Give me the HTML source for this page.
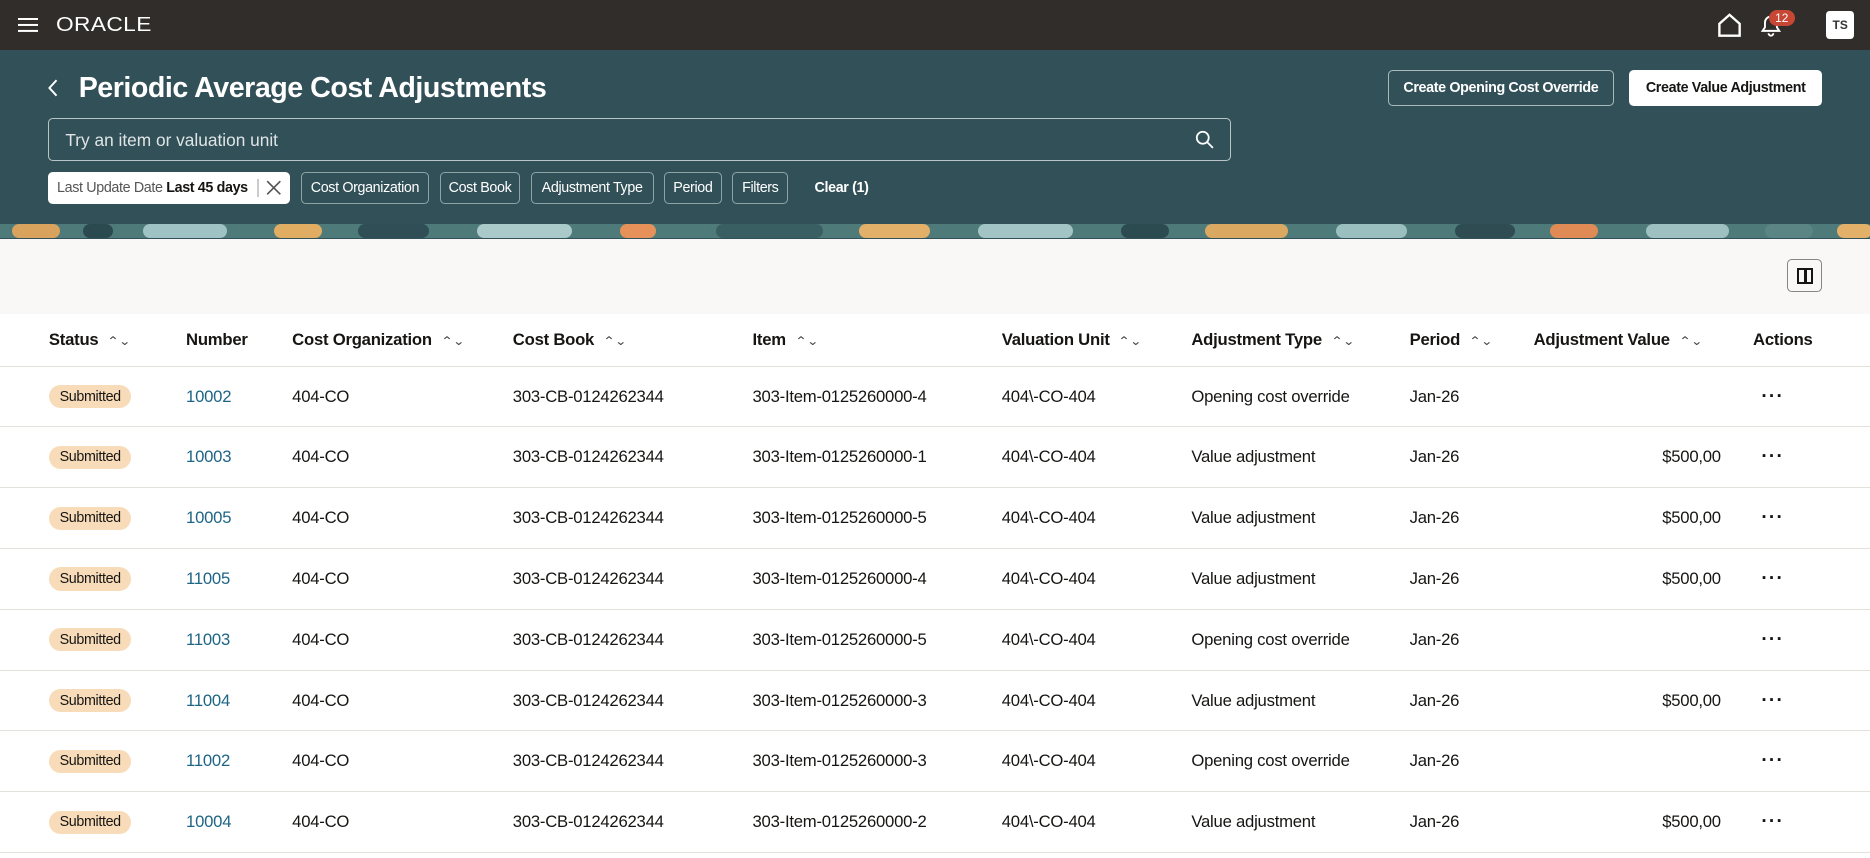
<!DOCTYPE html>
<html><head><meta charset="utf-8"><style>
*{box-sizing:border-box;margin:0;padding:0}
html,body{width:1870px;height:858px;overflow:hidden;background:#fff}
#w{zoom:1.19260;width:1568px;height:720px;position:relative;font-family:"Liberation Sans",sans-serif;color:#161513}
.top{position:absolute;left:0;top:0;width:1568px;height:42px;background:#312d2a}
.hdr{position:absolute;left:0;top:42px;width:1568px;height:158px;background:#325058;overflow:hidden}
.band{position:absolute;left:0;top:146px;width:1568px;height:12px;background:#4f7a7a;overflow:hidden}
.band i{position:absolute;top:0;height:12px;border-radius:6px}
.abs{position:absolute}
.title{left:66px;top:60px;font-size:24px;font-weight:bold;color:#fff;letter-spacing:-0.4px}
.search{left:40px;top:99px;width:992px;height:36px;border:1px solid #b8c4c6;border-radius:4px;color:#dfe5e6;font-size:14.5px;padding:9px 14px}
.chip{position:absolute;top:144px;height:27px;border:1px solid #8ea3a6;border-radius:4px;color:#fff;font-size:12px;letter-spacing:-0.3px;display:flex;align-items:center;justify-content:center;white-space:nowrap}
.btn{position:absolute;top:59px;height:30px;border-radius:4px;font-size:12px;letter-spacing:-0.3px;font-weight:bold;display:flex;align-items:center;justify-content:center;white-space:nowrap}
.light{position:absolute;left:0;top:200px;width:1568px;height:63px;background:#f9f8f6}
table{position:absolute;left:0;top:263px;width:1568px;border-collapse:collapse;font-size:14px;letter-spacing:-0.2px}
td,th{height:51px;border-bottom:1px solid #e4e1dd;text-align:left;font-weight:normal;padding:0;white-space:nowrap}
th{height:44px;font-weight:bold;font-size:14px}
.s{display:inline-block;font-size:10px;margin-left:9px;color:#444;font-weight:normal;transform:scaleX(1.2)}
.badge{display:inline-block;background:#f8dcb9;border-radius:10px;font-size:12px;padding:3px 9px;margin-left:41px;letter-spacing:-0.3px}
a{color:#1e6585;text-decoration:none}
.v{text-align:right;padding-right:27px}
.dots{font-weight:bold;font-size:16px;letter-spacing:1px;padding-left:7px}
</style></head><body><div id="w">
<div class="top">
 <div class="abs" style="left:15px;top:15px;width:17px;height:2px;background:#fff;box-shadow:0 5px 0 #fff,0 10px 0 #fff"></div>
 <div class="abs" style="left:47px;top:12px;color:#fff;font-size:17px;letter-spacing:0.3px;transform:scaleX(1.12);transform-origin:left">ORACLE</div>
 <svg class="abs" style="left:1440px;top:11px" width="21" height="20"><path d="M2 19V9L10.5 1.5 19 9V19Z" fill="none" stroke="#fff" stroke-width="2"/></svg>
 <svg class="abs" style="left:1475px;top:11px" width="20" height="20"><path d="M3 15h14l-2-3V8a5 5 0 0 0-10 0v4z M8 17a2 2 0 0 0 4 0" fill="none" stroke="#fff" stroke-width="1.6"/></svg>
 <div class="abs" style="left:1483px;top:8px;width:22px;height:14px;border-radius:7px;background:#c74634;color:#fff;font-size:10px;text-align:center;line-height:14px">12</div>
 <div class="abs" style="left:1531px;top:9px;width:24px;height:24px;border-radius:3px;background:#fff;color:#333;font-size:10px;font-weight:bold;text-align:center;line-height:24px">TS</div>
</div>
<div class="hdr">
 <div class="band">
  <i style="left:10px;width:40px;background:#d9a35e"></i><i style="left:70px;width:25px;background:#2b4a50"></i><i style="left:120px;width:70px;background:#9fc3c4"></i><i style="left:230px;width:40px;background:#e0ad62"></i><i style="left:300px;width:60px;background:#2f4e55"></i><i style="left:400px;width:80px;background:#aac9c9"></i><i style="left:520px;width:30px;background:#e7915a"></i><i style="left:600px;width:90px;background:#3a5f63"></i><i style="left:720px;width:60px;background:#e3b06a"></i><i style="left:820px;width:80px;background:#a3c4c4"></i><i style="left:940px;width:40px;background:#2c4b51"></i><i style="left:1010px;width:70px;background:#dba862"></i><i style="left:1120px;width:60px;background:#9bbfbf"></i><i style="left:1220px;width:50px;background:#2e4c52"></i><i style="left:1300px;width:40px;background:#e08b56"></i><i style="left:1380px;width:70px;background:#9fc0c0"></i><i style="left:1480px;width:40px;background:#5b8585"></i><i style="left:1540px;width:30px;background:#e3b06a"></i>
 </div>
</div>
<svg class="abs" style="left:39px;top:66px" width="10" height="15"><path d="M8 1L2 7.5 8 14" fill="none" stroke="#fff" stroke-width="1.6"/></svg>
<div class="abs title">Periodic Average Cost Adjustments</div>
<div class="btn" style="left:1164px;width:189px;border:1px solid #a9b8ba;color:#fff">Create Opening Cost Override</div>
<div class="btn" style="left:1366px;width:162px;background:#fff;color:#161513">Create Value Adjustment</div>
<div class="abs search">Try an item or valuation unit</div>
<svg class="abs" style="left:1002px;top:109px" width="16" height="16"><circle cx="6.5" cy="6.5" r="5" fill="none" stroke="#fff" stroke-width="1.5"/><path d="M10 10l5 5" stroke="#fff" stroke-width="1.5"/></svg>
<div class="chip" style="left:40px;width:203px;background:#fff;border-color:#fff;color:#161513;justify-content:flex-start;padding-left:7px"><span style="color:#555">Last Update Date</span>&nbsp;<b>Last 45 days</b><span style="position:absolute;left:175px;top:5px;width:1px;height:15px;background:#ccc"></span><svg style="position:absolute;left:182px;top:6px" width="13" height="13"><path d="M1 1l11 11M12 1L1 12" stroke="#555" stroke-width="1.4"/></svg></div>
<div class="chip" style="left:252px;width:108px">Cost Organization</div>
<div class="chip" style="left:369px;width:67px">Cost Book</div>
<div class="chip" style="left:445px;width:103px">Adjustment Type</div>
<div class="chip" style="left:557px;width:48px">Period</div>
<div class="chip" style="left:614px;width:47px">Filters</div>
<div class="abs" style="left:683px;top:151px;color:#fff;font-size:12px;font-weight:bold;letter-spacing:-0.3px">Clear (1)</div>
<div class="light"><div class="abs" style="left:1498px;top:17px;width:30px;height:28px;border:1px solid #8a8580;border-radius:4px"><div style="position:absolute;left:8px;top:7px;width:13px;height:13px;border:2px solid #161513"></div><div style="position:absolute;left:14px;top:7px;width:2px;height:13px;background:#161513"></div></div></div>
<table>
<colgroup><col style="width:156px"><col style="width:89px"><col style="width:185px"><col style="width:201px"><col style="width:209px"><col style="width:159px"><col style="width:183px"><col style="width:104px"><col style="width:184px"><col></colgroup>
<tr><th style="padding-left:41px">Status<span class="s">⌃⌄</span></th><th>Number</th><th>Cost Organization<span class="s">⌃⌄</span></th><th>Cost Book<span class="s">⌃⌄</span></th><th>Item<span class="s">⌃⌄</span></th><th>Valuation Unit<span class="s">⌃⌄</span></th><th>Adjustment Type<span class="s">⌃⌄</span></th><th>Period<span class="s">⌃⌄</span></th><th>Adjustment Value<span class="s">⌃⌄</span></th><th>Actions</th></tr>
<tr><td><span class="badge">Submitted</span></td><td><a>10002</a></td><td>404-CO</td><td>303-CB-0124262344</td><td>303-Item-0125260000-4</td><td>404\-CO-404</td><td>Opening cost override</td><td>Jan-26</td><td></td><td class="dots">···</td></tr>
<tr><td><span class="badge">Submitted</span></td><td><a>10003</a></td><td>404-CO</td><td>303-CB-0124262344</td><td>303-Item-0125260000-1</td><td>404\-CO-404</td><td>Value adjustment</td><td>Jan-26</td><td class="v">$500,00</td><td class="dots">···</td></tr>
<tr><td><span class="badge">Submitted</span></td><td><a>10005</a></td><td>404-CO</td><td>303-CB-0124262344</td><td>303-Item-0125260000-5</td><td>404\-CO-404</td><td>Value adjustment</td><td>Jan-26</td><td class="v">$500,00</td><td class="dots">···</td></tr>
<tr><td><span class="badge">Submitted</span></td><td><a>11005</a></td><td>404-CO</td><td>303-CB-0124262344</td><td>303-Item-0125260000-4</td><td>404\-CO-404</td><td>Value adjustment</td><td>Jan-26</td><td class="v">$500,00</td><td class="dots">···</td></tr>
<tr><td><span class="badge">Submitted</span></td><td><a>11003</a></td><td>404-CO</td><td>303-CB-0124262344</td><td>303-Item-0125260000-5</td><td>404\-CO-404</td><td>Opening cost override</td><td>Jan-26</td><td></td><td class="dots">···</td></tr>
<tr><td><span class="badge">Submitted</span></td><td><a>11004</a></td><td>404-CO</td><td>303-CB-0124262344</td><td>303-Item-0125260000-3</td><td>404\-CO-404</td><td>Value adjustment</td><td>Jan-26</td><td class="v">$500,00</td><td class="dots">···</td></tr>
<tr><td><span class="badge">Submitted</span></td><td><a>11002</a></td><td>404-CO</td><td>303-CB-0124262344</td><td>303-Item-0125260000-3</td><td>404\-CO-404</td><td>Opening cost override</td><td>Jan-26</td><td></td><td class="dots">···</td></tr>
<tr><td><span class="badge">Submitted</span></td><td><a>10004</a></td><td>404-CO</td><td>303-CB-0124262344</td><td>303-Item-0125260000-2</td><td>404\-CO-404</td><td>Value adjustment</td><td>Jan-26</td><td class="v">$500,00</td><td class="dots">···</td></tr>
</table>
</div></body></html>
